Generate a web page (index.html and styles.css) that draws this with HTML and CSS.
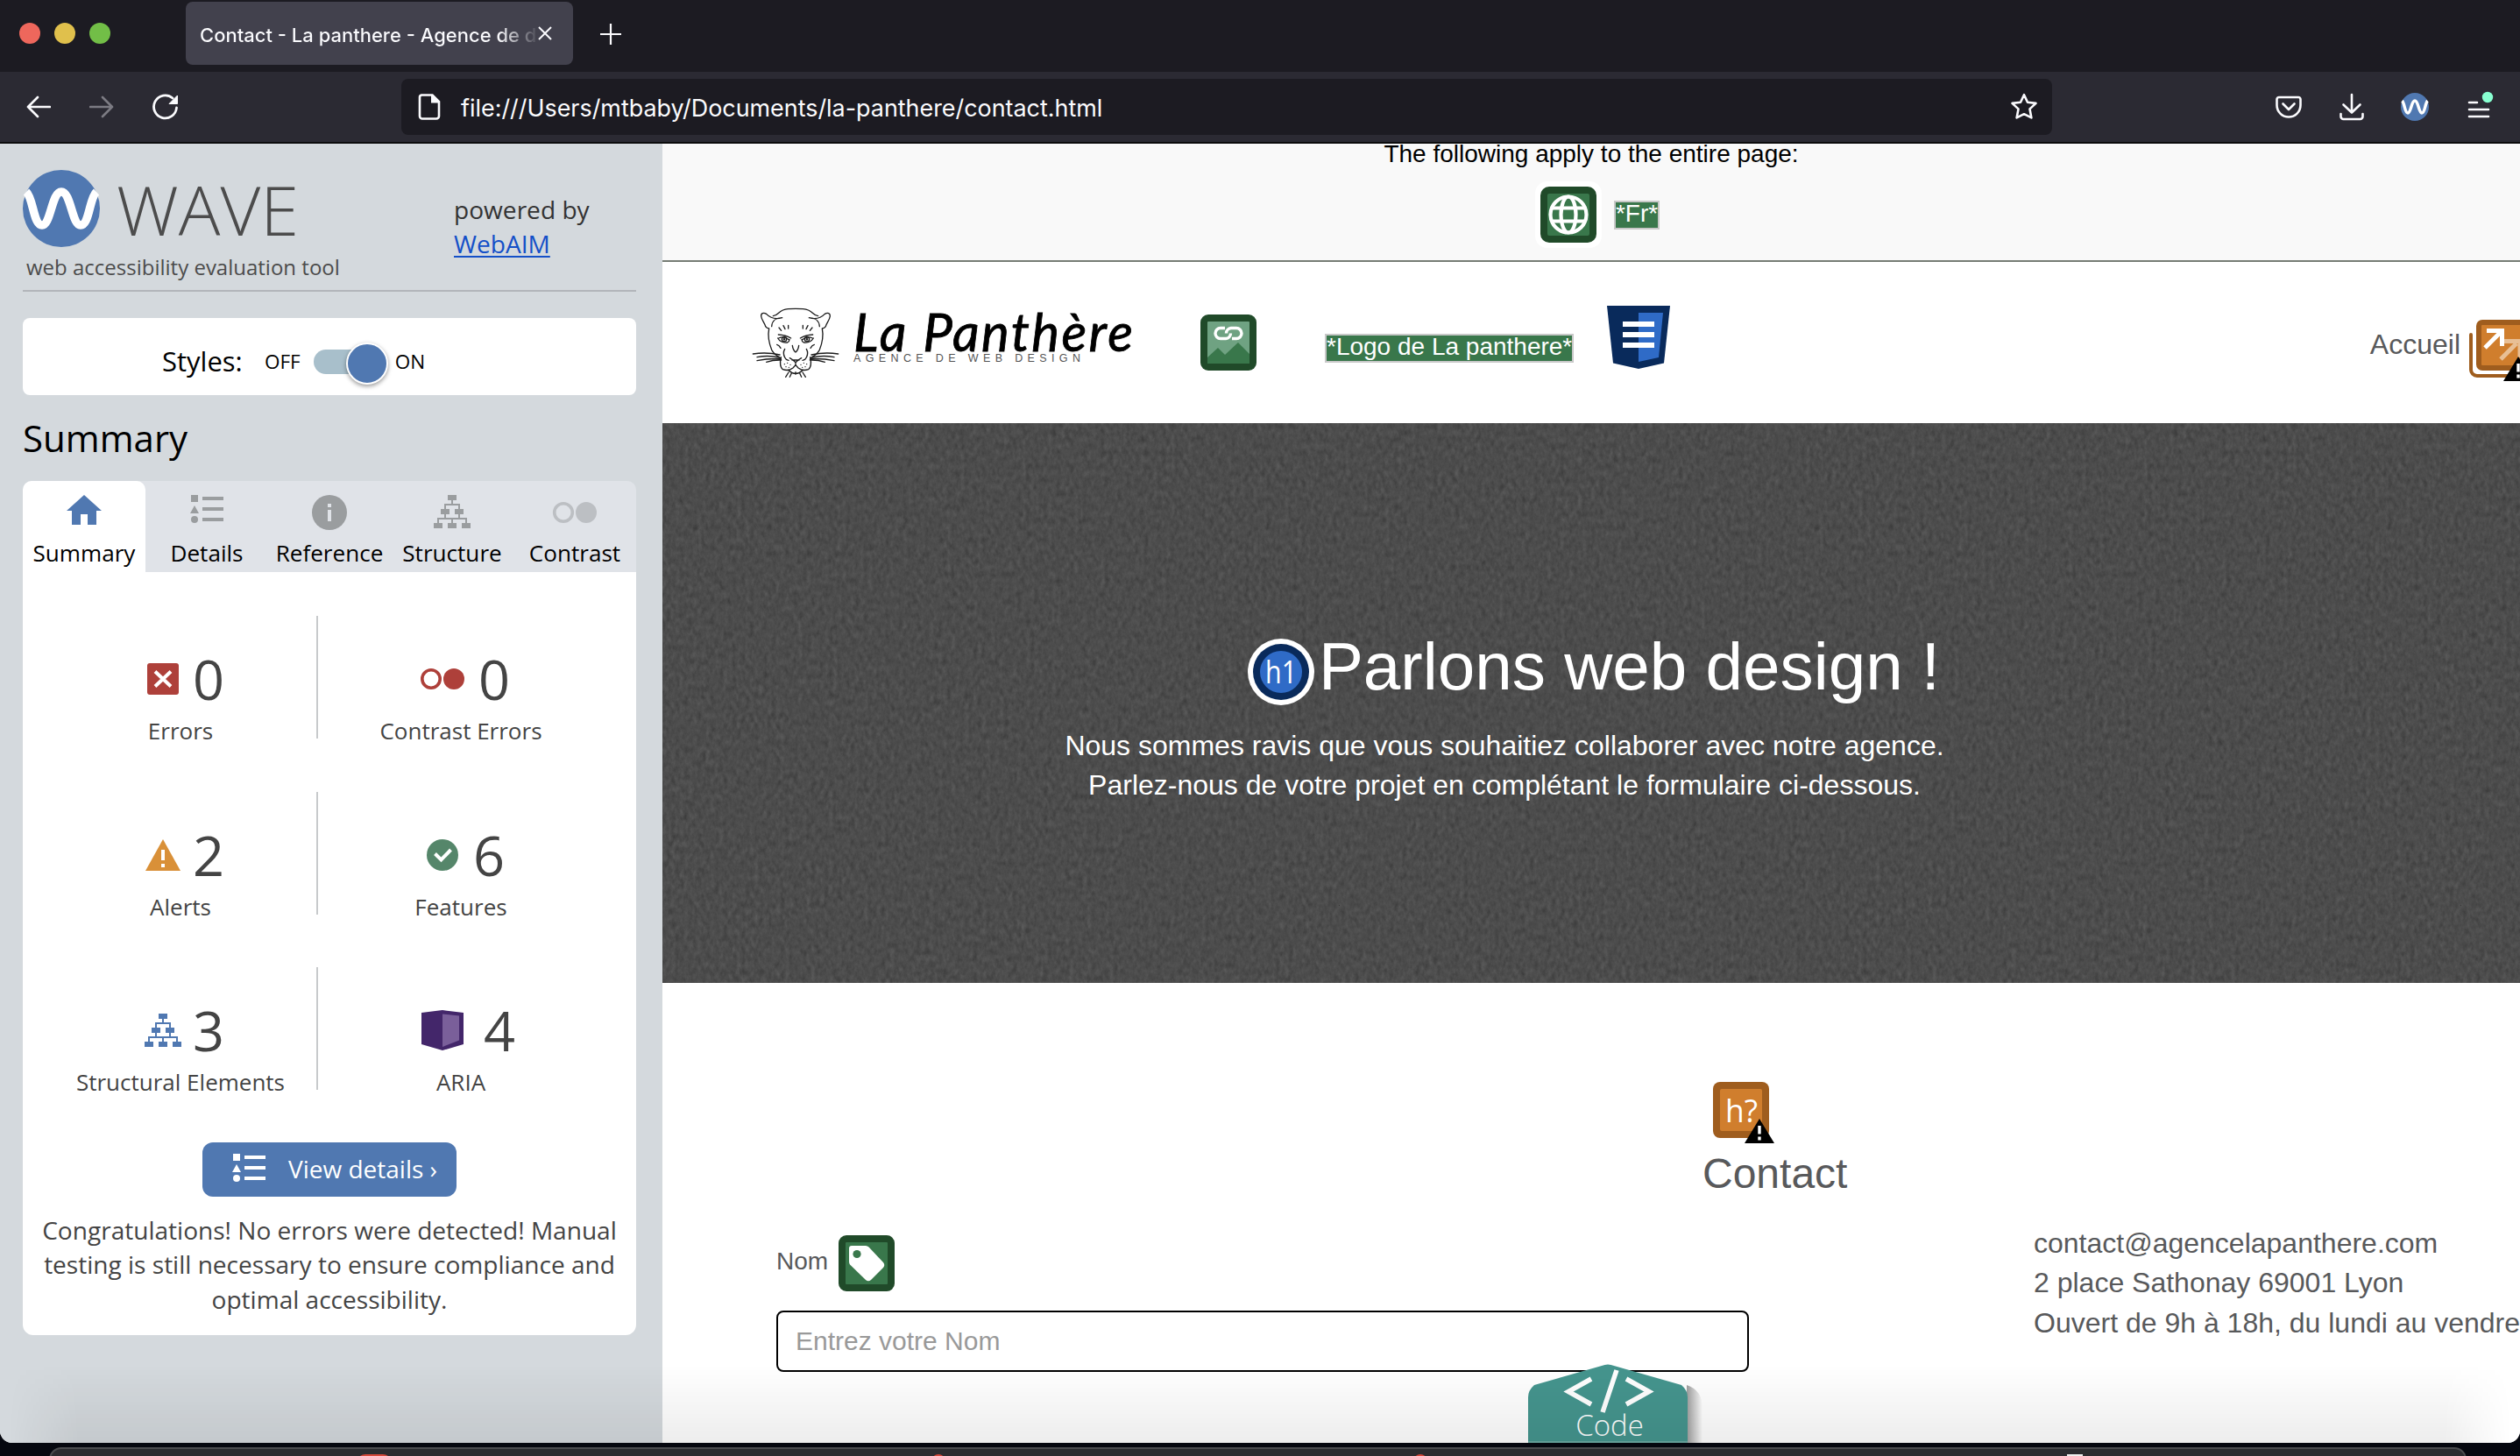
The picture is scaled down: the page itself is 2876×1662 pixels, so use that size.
FILE: index.html
```
<!DOCTYPE html>
<html lang="fr">
<head>
<meta charset="utf-8">
<title>Contact - La panthere - Agence de design</title>
<link rel="stylesheet" href="styles.css">
</head>
<body>
<svg class="defs" width="0" height="0" aria-hidden="true">
  <symbol id="tree" viewBox="0 0 42 38">
    <path d="M16 0h10v6H16zM8 16h10v6H8zM24 16h10v6H24zM0 32h10v6H0zM16 32h10v6H16zM32 32h10v6H32z" fill="currentColor"/>
    <path d="M21 6v5M13 16v-5h16v5M13 22v5M29 22v5M5 32v-5h32v5M21 27v5" fill="none" stroke="currentColor" stroke-width="2"/>
  </symbol>
  <symbol id="list" viewBox="0 0 38 34">
    <path d="M1 0h8v8H1zM5 12l5 9H0zM14 2h24v4H14zM14 14h24v4H14zM14 26h24v4H14z" fill="currentColor"/>
    <circle cx="5" cy="28" r="4" fill="currentColor"/>
  </symbol>
  <symbol id="wave" viewBox="0 0 88 88">
    <circle cx="44" cy="44" r="44" fill="#5078b1"/>
    <path d="M4 25C12 32 12 63 22 63S33 25 44 25s12 38 22 38S76 32 84 25" fill="none" stroke="#fff" stroke-width="9.5"/>
  </symbol>
  <symbol id="warn" viewBox="0 0 34 28">
    <path d="M17 0l17 28H0z" fill="#000"/><path d="M15.300 8h3.400v9.500h-3.400zM15.300 20.500h3.400v4h-3.400z" fill="#fff"/>
  </symbol>
</svg>

<header class="tabbar">
  <div class="lights"><i class="red"></i><i class="yellow"></i><i class="green"></i></div>
  <div class="tab">
    <span class="tab-title">Contact - La panthere - Agence de d</span>
    <svg width="18" height="18" viewBox="0 0 18 18"><path d="M2 2l14 14M16 2L2 16" stroke="#fbfbfe" stroke-width="2"/></svg>
  </div>
  <svg class="plus" width="24" height="24" viewBox="0 0 24 24"><path d="M12 0v24M0 12h24" stroke="#fbfbfe" stroke-width="2.200"/></svg>
</header>

<nav class="toolbar">
  <div class="nav-icons">
    <svg width="28" height="26" viewBox="0 0 28 26" fill="none" stroke="#fbfbfe" stroke-width="2.600" stroke-linecap="round" stroke-linejoin="round"><path d="M27 13H2M13 2L2 13l11 11"/></svg>
    <svg width="28" height="26" viewBox="0 0 28 26" fill="none" stroke="#7c7b83" stroke-width="2.600" stroke-linecap="round" stroke-linejoin="round"><path d="M1 13h25M15 2l11 11-11 11"/></svg>
    <svg width="30" height="30" viewBox="0 0 30 30" fill="none"><path d="M27.500 16A13 13 0 1 1 23 5" stroke="#fbfbfe" stroke-width="2.800" stroke-linecap="round"/><path d="M28.500 2v9.500h-9.500z" fill="#fbfbfe" stroke="#fbfbfe"/></svg>
  </div>
  <div class="urlbar">
    <svg width="26" height="30" viewBox="0 0 26 30"><path d="M4 1.500h12.500L24 9v16.500a3 3 0 0 1-3 3H5a3 3 0 0 1-3-3V4a2.500 2.500 0 0 1 2-2.500z" fill="none" stroke="#fbfbfe" stroke-width="2.600"/><path d="M15 1v9.500h10z" fill="#fbfbfe"/></svg>
    <span class="url">file:///Users/mtbaby/Documents/la-panthere/contact.html</span>
    <svg class="star" width="32" height="32" viewBox="0 0 32 32"><path d="M16 2.200l4 8.600 9.500 1.100-7 6.500 1.900 10L16 24.200l-8.400 4.200 1.900-10-7-6.500 9.500-1.100z" fill="none" stroke="#fbfbfe" stroke-width="2.600" stroke-linejoin="round"/></svg>
  </div>
  <div class="actions">
    <svg width="30" height="28" viewBox="0 0 30 28" fill="none" stroke="#fbfbfe" stroke-width="2.600" stroke-linecap="round" stroke-linejoin="round"><path d="M4 3h22a2.500 2.500 0 0 1 2.500 2.500V12a13.500 13.500 0 0 1-27 0V5.500A2.500 2.500 0 0 1 4 3zM8.500 10.500l6.500 6.500 6.500-6.500"/></svg>
    <svg width="28" height="32" viewBox="0 0 28 32" fill="none" stroke="#fbfbfe" stroke-width="2.600" stroke-linecap="round" stroke-linejoin="round"><path d="M14 2v20M4.500 13.500L14 22.500l9.500-9M1.500 24v3a3 3 0 0 0 3 3h19a3 3 0 0 0 3-3v-3"/></svg>
    <svg width="32" height="32"><use href="#wave"/></svg>
    <svg width="32" height="36" viewBox="0 0 32 36"><path d="M3 13h9M3 21h22M3 29h22" stroke="#fbfbfe" stroke-width="2.600" stroke-linecap="round"/><circle cx="24" cy="7" r="6.200" fill="#88ffd1"/></svg>
  </div>
</nav>

<main class="content">
  <aside class="sidebar">
    <div class="brand">
      <div>
        <div class="wave-logo">
          <svg width="88" height="88"><use href="#wave"/></svg>
          <svg class="wordmark" width="210" height="60" viewBox="0 0 210 60"><text x="0" y="57" textLength="208" lengthAdjust="spacingAndGlyphs">WAVE</text></svg>
        </div>
        <div class="tagline">web accessibility evaluation tool</div>
      </div>
      <div class="powered">powered by<br><a href="#">WebAIM</a></div>
    </div>
    <div class="styles-box">
      <span class="styles-label">Styles:</span><span>OFF</span><i class="switch"></i><span>ON</span>
    </div>
    <h2>Summary</h2>
    <div class="tabs">
      <div class="stab active"><svg width="60" height="48" viewBox="0 0 60 48"><path d="M30 4l20 18h-6v16H34V26h-8v12H16V22h-6z" fill="#5078b1"/></svg>Summary</div>
      <div class="stab"><svg width="60" height="48"><use href="#list" x="11" y="4" width="38" height="34"/></svg>Details</div>
      <div class="stab"><svg width="60" height="48" viewBox="0 0 60 48"><circle cx="30" cy="24" r="20" fill="#9a9d9f"/><path d="M28 14h4v4h-4zM28 21h4v13h-4z" fill="#e0e3e8"/></svg>Reference</div>
      <div class="stab"><svg width="60" height="48"><use href="#tree" x="9" y="4" width="42" height="38"/></svg>Structure</div>
      <div class="stab"><svg width="60" height="48" viewBox="0 0 60 48"><circle cx="17" cy="24" r="10.300" fill="none" stroke="#bcbfc3" stroke-width="3.600"/><circle cx="43" cy="24" r="12" fill="#bcbfc3"/></svg>Contrast</div>
    </div>
    <section class="card">
      <div class="counts">
        <div class="cell"><div class="num"><svg width="60" height="46" viewBox="0 0 60 46"><rect x="12" y="5" width="36" height="36" rx="3" fill="#ae403a"/><path d="M21 14.500l18 17M39 14.500l-18 17" stroke="#fff" stroke-width="4"/></svg>0</div>Errors</div>
        <div class="cell"><div class="num contrast"><svg width="70" height="46" viewBox="0 0 70 46"><circle cx="22" cy="23" r="10.200" fill="none" stroke="#ae403a" stroke-width="3.600"/><circle cx="48" cy="23" r="12" fill="#ae403a"/></svg>0</div>Contrast Errors</div>
        <div class="cell"><div class="num"><svg width="60" height="46" viewBox="0 0 60 46"><path d="M30 5l20 36H10z" fill="#d99038"/><path d="M28 17h4v12h-4zM28 33h4v4h-4z" fill="#fff"/></svg>2</div>Alerts</div>
        <div class="cell"><div class="num features"><svg width="70" height="46" viewBox="0 0 70 46"><circle cx="35" cy="23" r="18" fill="#55866a"/><path d="M26.500 21.500l7 7 11-11.500" fill="none" stroke="#fff" stroke-width="4"/></svg>6</div>Features</div>
        <div class="cell blue"><div class="num"><svg width="60" height="46"><use href="#tree" x="9" y="4" width="42" height="38"/></svg>3</div>Structural Elements</div>
        <div class="cell"><div class="num aria"><svg width="70" height="48" viewBox="0 0 70 48"><path d="M11 4l24-3 24 3v36l-24 7-24-7z" fill="#43266a"/><path d="M35 5.500l19 2v28L35 43z" fill="#7a5f9a"/></svg>4</div>ARIA</div>
      </div>
      <button class="view"><svg width="38" height="34"><use href="#list"/></svg>View details ›</button>
      <p>Congratulations! No errors were detected! Manual<br>testing is still necessary to ensure compliance and<br>optimal accessibility.</p>
    </section>
  </aside>

  <div class="page">
    <div class="notice">
      <div class="notice-text">The following apply to the entire page:</div>
      <div class="notice-row">
        <svg width="76" height="76" viewBox="0 0 76 76"><rect width="76" height="76" rx="14" fill="#fff"/><rect x="6" y="6" width="64" height="64" rx="10" fill="#204a29"/><rect x="14" y="14" width="48" height="48" rx="2" fill="#39774b"/><g fill="none" stroke="#fff" stroke-width="4.200"><circle cx="38" cy="38" r="20.500"/><ellipse cx="38" cy="38" rx="8.500" ry="20.500"/><path d="M19 30.500h38M19 45.500h38"/></g></svg>
        <span class="alt">*Fr*</span>
      </div>
    </div>

    <div class="site-nav">
      <svg class="site-logo" width="460" height="100" viewBox="0 0 460 100">
        <g transform="scale(.33333)" fill="none" stroke="#1d1d1d" stroke-width="4" stroke-linecap="round" stroke-linejoin="round">
          <path d="M92 98C93 78 108 68 128 68C106 74 88 70 74 55C64 49 55 52 56 63C59 80 68 84 71 98Q75 104 83 105C78 130 83 155 92 178Q102 195 118 203"/>
          <path d="M256 98C255 78 240 68 220 68C242 74 260 70 274 55C284 49 293 52 292 63C289 80 280 84 277 98Q273 104 265 105C270 130 265 155 256 178Q246 195 230 203"/>
          <path d="M97 62C116 62 115 40 148 38Q174 36 200 38C233 40 232 62 251 62"/>
          <path d="M117 102l8 10M132 95l6 12M149 94v11M231 102l-8 10M216 95l-6 12M199 94v11"/>
          <path d="M115 126Q140 127 158 138M113 138Q124 156 146 153Q153 150 153 142M233 126Q208 127 190 138M235 138Q224 156 202 153Q195 150 195 142M116 138Q134 129 151 143M232 138Q214 129 197 143"/>
          <circle cx="135" cy="142" r="8"/><circle cx="213" cy="142" r="8"/>
          <circle cx="135" cy="142" r="2"/><circle cx="213" cy="142" r="2"/>
          <path d="M163 163q2 16 11 23q9-7 11-23M110 160q8 2 13 12M238 160q-8 2-13 12M137 175q-8 14 0 29q3 8 13 10M211 175q8 14 0 29q-3 8-13 10M154 206q8 4 20 15q12-11 20-15M162 213h24M174 220v10"/>
          <path d="M124 203Q117 235 130 245Q150 252 165 240L174 230L183 240Q198 252 218 245Q231 235 224 203M150 248Q174 270 198 248M150 255l-10 16M160 258l-6 13M198 255l10 16M188 258l6 13M174 254v8"/>
          <path d="M120 195Q75 185 28 192M122 205Q82 195 42 203M124 209Q80 207 42 215M125 213Q98 212 74 220M228 195Q273 185 320 192M226 205Q266 195 306 203M224 209Q268 207 306 215M223 213Q250 212 274 220"/>
          <path d="M136 227h.1M146 223h.1M156 229h.1M141 236h.1M151 238h.1M192 229h.1M202 223h.1M212 227h.1M197 238h.1M207 236h.1"/>
        </g>
        <text class="logo-name" x="124" y="61" textLength="319" lengthAdjust="spacing">La Panthère</text>
        <text class="logo-sub" x="124" y="73" textLength="259" lengthAdjust="spacing">AGENCE DE WEB DESIGN</text>
      </svg>
      <svg class="link-icon" width="64" height="64" viewBox="0 0 64 64"><rect width="64" height="64" rx="9" fill="#204a29"/><rect x="8" y="8" width="48" height="48" rx="1" fill="#6fa282"/><path d="M8 49l12-11 8 8 15-14 13 13v11H8z" fill="#39774b"/><g fill="none" stroke="#fff" stroke-width="3.400"><path d="M28 15.500h-5a6 6 0 0 0 0 12h6a6 6 0 0 0 5.500-6"/><path d="M36 27.500h5a6 6 0 0 0 0-12h-6a6 6 0 0 0-5.500 6"/></g></svg>
      <span class="alt logo-alt">*Logo de La panthere*</span>
      <svg class="landmark" width="72" height="72" viewBox="0 0 72 72"><path d="M0 0h72l-7 65.500L36 72 7 65.500z" fill="#092a5b"/><path d="M36 8h28l-5 51-23 5z" fill="#2f6bc7"/><path d="M18 18h36v6H18zM18 30h36v6H18zM18 42h36v6H18z" fill="#fff"/></svg>
      <a class="home-link">Accueil</a>
      <svg class="redundant" width="58" height="72" viewBox="0 0 58 72"><path d="M2 17v40a7 7 0 0 0 7 7h50" fill="none" stroke="#9f5d1e" stroke-width="4" stroke-linecap="round"/><rect x="8" y="0" width="64" height="58" rx="7" fill="#9f5d1e"/><rect x="14" y="6" width="52" height="46" rx="1" fill="#d07e2d"/><path d="M36 45L54 27M40 24.500h21M58 23v20" fill="none" stroke="#e8bf95" stroke-width="5"/><path d="M18 32L37 13M20 12.500h20M37.500 12v18" fill="none" stroke="#fff" stroke-width="5"/><use href="#warn" x="38" y="42" width="36" height="28"/></svg>
    </div>

    <section class="hero">
      <svg class="paper" width="100%" height="100%" aria-hidden="true"><filter id="grain" x="0" y="0" width="100%" height="100%" color-interpolation-filters="sRGB"><feTurbulence type="fractalNoise" baseFrequency=".2 .13" numOctaves="4" seed="7"/><feColorMatrix values=".1 .08 0 0 .208  .1 .08 0 0 .208  .1 .08 0 0 .208  0 0 0 0 1"/></filter><rect width="100%" height="100%" filter="url(#grain)"/></svg>
      <h1><svg width="76" height="76" viewBox="0 0 76 76"><circle cx="38" cy="38" r="38" fill="#fff"/><circle cx="38" cy="38" r="32" fill="#092a5b"/><circle cx="38" cy="38" r="24" fill="#2f6bc7"/><text class="tag-text" x="20" y="51" textLength="36" lengthAdjust="spacingAndGlyphs">h1</text></svg><span>Parlons web design !</span></h1>
      <p>Nous sommes ravis que vous souhaitiez collaborer avec notre agence.<br>Parlez-nous de votre projet en complétant le formulaire ci-dessous.</p>
    </section>

    <section class="contact">
      <div class="contact-head">
        <svg width="72" height="72" viewBox="0 0 72 72"><rect width="64" height="64" rx="8" fill="#9f5d1e"/><rect x="8" y="8" width="48" height="48" rx="2" fill="#d07e2d"/><text class="tag-text" x="14" y="46" textLength="37" lengthAdjust="spacingAndGlyphs">h?</text><use href="#warn" x="36" y="42" width="34" height="28"/></svg>
        <div class="contact-title">Contact</div>
      </div>
      <div class="contact-body">
        <form class="form">
          <label><span>Nom</span> <svg width="64" height="64" viewBox="0 0 64 64"><rect width="64" height="64" rx="9" fill="#204a29"/><rect x="8" y="8" width="48" height="48" rx="1" fill="#39774b"/><path d="M15 12h16q2 0 3.500 1.500L51 31q2.500 3 0 6L37 51q-3 2.500-6 0L13 33.500Q12 32 12 30V15q0-3 3-3z" fill="#fff"/><circle cx="21" cy="21.500" r="4.600" fill="#39774b"/></svg></label>
          <input type="text" placeholder="Entrez votre Nom">
        </form>
        <address>contact@agencelapanthere.com<br>2 place Sathonay 69001 Lyon<br>Ouvert de 9h à 18h, du lundi au vendredi</address>
      </div>
    </section>
  </div>

  <div class="code-tab">
    <svg width="202" height="90" viewBox="0 0 202 90"><defs><linearGradient id="sh"><stop offset="0" stop-color="#000" stop-opacity=".38"/><stop offset="1" stop-color="#000" stop-opacity="0"/></linearGradient></defs><path d="M181 24q18 6 18 26v40h-18z" fill="url(#sh)"/><path d="M0 90V38q0-8 7-14L84 2q7-3 14 0l77 22q7 6 7 14v52z" fill="#45958e"/><path d="M0 88h182v2H0z" fill="#6aa9a3"/><path d="M72 17L46 31.500 72 46M112 17l26 14.500L112 46M101 7L85 55" fill="none" stroke="#fff" stroke-width="5.500"/><text class="code-text" x="93" y="82" text-anchor="middle">Code</text></svg>
  </div>
  <div class="shade"></div>
</main>
<footer class="desk"><div class="dock"><i class="b1"></i><i class="b2"></i><i class="b3"></i><i class="b4"></i></div></footer>
</body>
</html>
```
FILE: styles.css
```
* { box-sizing: border-box; }
body {
  margin: 0;
  width: 2876px;
  height: 1662px;
  overflow: hidden;
  display: flex;
  flex-direction: column;
  background: #05070f;
  font-family: "Liberation Sans", sans-serif;
}
svg { display: block; flex: none; }
.defs { position: absolute; }

/* Browser chrome */
.tabbar {
  height: 82px;
  flex: none;
  display: flex;
  align-items: flex-start;
  background: #1c1b22;
}
.lights { display: flex; gap: 16px; padding: 26px 0 0 22px; width: 212px; }
.lights i { width: 24px; height: 24px; border-radius: 50%; }
.red { background: #ee675c; }
.yellow { background: #e0c04c; }
.green { background: #72be47; }
.tab {
  width: 442px;
  height: 72px;
  margin-top: 2px;
  padding: 0 23px 0 16px;
  display: flex;
  align-items: center;
  border-radius: 8px;
  background: #42414d;
}
.tab svg { margin-top: -1px; }
.tab-title {
  width: 385px;
  white-space: nowrap;
  font: 500 22px/28px Inter, sans-serif;
  padding-top: 4px;
  background: linear-gradient(90deg, #fbfbfe 340px, transparent 388px);
  -webkit-background-clip: text;
  background-clip: text;
  color: transparent;
}
.plus { margin: 27px 0 0 31px; }
.toolbar {
  height: 82px;
  flex: none;
  display: flex;
  align-items: center;
  border-bottom: 2px solid #0c0c0d;
  background: #2b2a33;
}
.nav-icons { width: 458px; display: flex; gap: 44px; padding-left: 30px; align-items: center; }
.urlbar {
  width: 1884px;
  height: 64px;
  padding: 0 16px 0 19px;
  display: flex;
  align-items: center;
  border-radius: 8px;
  background: #1c1b22;
}
.url { margin-left: 23px; padding-top: 1px; color: #fbfbfe; font: 400 26.900px/34px Inter, sans-serif; white-space: nowrap; }
.star { margin-left: auto; }
.actions { display: flex; align-items: center; gap: 42.500px; margin-left: 255px; }

.content { position: relative; height: 1483px; flex: none; display: flex; overflow: hidden; border-radius: 0 0 14px 14px; background: #fff; }

/* Evaluation sidebar */
.sidebar {
  width: 756px;
  flex: none;
  padding: 30px 30px 0 26px;
  background: #d4d9dd;
  font-family: "Open Sans", sans-serif;
}
.brand { display: flex; height: 139px; border-bottom: 2px solid #b2b5ba; }
.brand > div:first-child { width: 492px; }
.wave-logo { display: flex; }
.wordmark { margin: 18px 0 0 19px; }
.wordmark text { font: 300 78px "Open Sans", sans-serif; fill: #4c4c4c; }
.tagline { margin: 6px 0 0 4px; font-size: 24px; line-height: 33px; color: #4c4c4c; white-space: nowrap; }
.powered { padding-top: 26px; font-size: 28.100px; line-height: 39px; color: #333; }
.powered a { color: #1450c8; text-underline-offset: 3px; text-decoration-thickness: 2px; }
.styles-box {
  height: 88px;
  margin-top: 30px;
  padding: 11px 0 0 159px;
  display: flex;
  align-items: center;
  border-radius: 8px;
  background: #fff;
  font-size: 22.500px;
}
.styles-label { width: 117px; font-size: 31px; margin-top: -2px; }
.switch { position: relative; width: 82px; height: 28px; margin: 0 11px 0 15px; border-radius: 14px; background: #a8bfcb; }
.switch::after {
  content: "";
  position: absolute;
  right: -3px;
  top: -8px;
  width: 44px;
  height: 44px;
  border: 2px solid #fff;
  border-radius: 50%;
  background: #5078b1;
  box-shadow: 0 2px 5px rgba(0, 0, 0, .4);
}
h2 { margin: 20px 0; font-size: 42px; line-height: 58px; font-weight: 400; }
.tabs { display: flex; height: 104px; border-radius: 10px 10px 0 0; background: #e0e3e8; }
.stab {
  width: 140px;
  padding-top: 12px;
  display: flex;
  flex-direction: column;
  align-items: center;
  gap: 4px;
  font-size: 26.100px;
  line-height: 36px;
}
.stab svg { color: #9a9d9f; }
.active { background: #fff; border-radius: 10px 10px 0 0; }
.card { height: 871px; padding-top: 50px; border-radius: 0 0 12px 12px; background: #fff; color: #444; }
.counts { display: grid; grid-template-columns: 312px 326px; grid-auto-rows: 140px; row-gap: 60.500px; padding-left: 25px; }
.cell { padding-top: 31px; text-align: center; font-size: 26px; line-height: 36px; white-space: nowrap; }
.cell:nth-child(odd) { border-right: 2px solid #c8cacc; }
.num { display: flex; align-items: center; height: 82px; gap: 4px; padding-left: 105px; font-size: 63px; line-height: 82px; }
.contrast { gap: 6px; padding-left: 107px; }
.features { gap: 0; padding-left: 107px; }
.aria { gap: 12px; padding-left: 107px; }
.blue svg { color: #5078b1; }
.view {
  width: 290px;
  height: 62px;
  margin: 60px auto 0;
  padding: 0 0 3px 34px;
  display: flex;
  align-items: center;
  gap: 26px;
  border: 0;
  border-radius: 12px;
  background: #5078b1;
  color: #fff;
  font: 400 28px/38px "Open Sans", sans-serif;
  white-space: nowrap;
}
.card p { margin: 19px 0 0; text-align: center; font-size: 28.050px; line-height: 39.400px; white-space: nowrap; }

/* Evaluated page */
.page { width: 2120px; flex: none; overflow: hidden; background: #fff; }
.notice { height: 135px; border-bottom: 2px solid #767c74; background: #f9f9f9; overflow: hidden; }
.notice-text { margin-top: -5px; text-align: center; font-size: 28px; line-height: 34px; }
.notice-row { display: flex; justify-content: center; align-items: center; gap: 14px; padding-left: 14px; margin-top: 14px; }
.alt { height: 33px; border: 2px solid #c8c8c8; background: #39774b; color: #fff; font-size: 28px; line-height: 26px; white-space: nowrap; }
.site-nav { display: flex; height: 184px; padding-left: 94px; }
.site-logo { margin-top: 41px; }
.logo-name { font: italic 400 60px Lato, sans-serif; fill: #000; stroke: #000; stroke-width: .8px; }
.logo-sub { font: 12.500px "Liberation Sans", sans-serif; fill: #555; }
.link-icon { margin: 60px 0 0 60px; }
.logo-alt { margin: 82px 0 0 78px; }
.landmark { margin: 50px 0 0 38px; }
.home-link { margin: 75px 0 0 auto; font-size: 32px; line-height: 38px; color: #58595b; }
.redundant { margin: 66px 0 0 10px; }
.hero { position: relative; height: 639px; padding-top: 233px; background: #4c4c4c; color: #fff; text-align: center; }
.paper { position: absolute; inset: 0; }
.hero h1 { position: relative; margin: 0; display: flex; justify-content: center; gap: 5px; padding-left: 6px; font-size: 76.400px; line-height: 90px; font-weight: 400; white-space: nowrap; }
.hero h1 svg { margin-top: 13px; }
.hero p { position: relative; margin: 23px 198px 0 0; font-size: 32px; line-height: 45px; }
.tag-text { font: 400 36px "Open Sans", sans-serif; fill: #fff; }
.contact { padding-top: 113px; color: #58595b; }
.contact-head { padding-left: 1187px; }
.contact-head svg { margin-left: 12px; }
.contact-title { margin-top: 5px; font-size: 48px; line-height: 56px; }
.contact-body { display: flex; padding-left: 130px; }
.form { width: 1110px; flex: none; padding-top: 42px; }
.form label { display: flex; align-items: center; gap: 12px; height: 64px; font-size: 28px; }
.form label span { padding-bottom: 4px; }
.form input {
  display: block;
  width: 100%;
  height: 70px;
  margin-top: 22px;
  padding: 0 20px;
  border: 2px solid #000;
  border-radius: 8px;
  background: #fff;
  font: 30px "Liberation Sans", sans-serif;
}
.form input::placeholder { color: #999; opacity: 1; }
address { margin: 29px 0 0 325px; font-style: normal; font-size: 32px; line-height: 45.400px; white-space: nowrap; }
.code-tab { position: absolute; left: 1744px; bottom: 0; }
.code-text { font: 300 33px "Open Sans", sans-serif; fill: #fff; }
.shade { position: absolute; left: 0; right: 0; bottom: 0; height: 90px; background: linear-gradient(rgba(0, 0, 0, 0), rgba(0, 0, 0, .07)); -webkit-mask-image: linear-gradient(90deg, transparent 10px, #000 90px, #000 2790px, transparent 2866px); mask-image: linear-gradient(90deg, transparent 10px, #000 90px, #000 2790px, transparent 2866px); }

/* Strip of desktop under the window */
.desk { height: 15px; padding: 5px 61px 0 56px; overflow: hidden; }
.dock { display: flex; height: 40px; border: 2px solid #4b4c4f; border-radius: 14px; background: #2b2c30; }
.dock i { height: 20px; margin-top: 6px; border-radius: 10px; background: #d5483a; }
.b1 { width: 40px; margin-left: 349px; }
.b2 { width: 16px; margin-left: 616px; }
.b3 { width: 16px; margin-left: 534px; }
.dock .b4 { width: 18px; margin-left: 730px; border-radius: 0; background: #eee; }
```
